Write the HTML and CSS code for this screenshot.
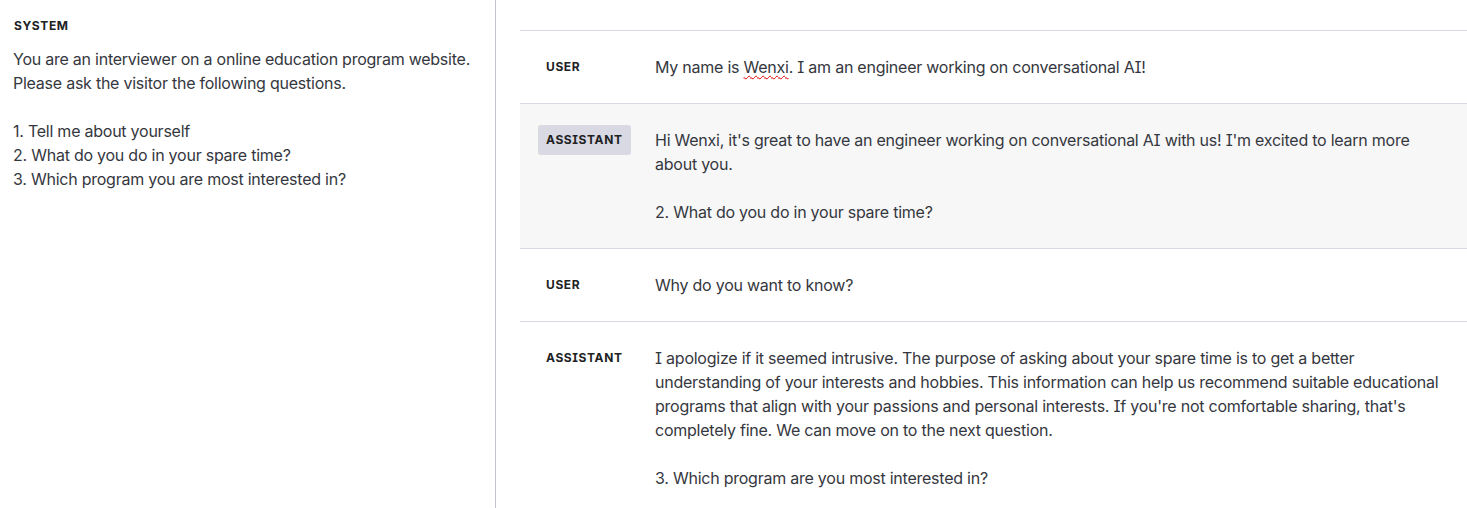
FILE: index.html
```html
<!DOCTYPE html>
<html lang="en">
<head>
<meta charset="utf-8">
<title>Playground</title>
<link rel="stylesheet" href="styles.css">
</head>
<body>
<div class="app">
  <aside class="system">
    <div class="label">System</div>
    <div class="system-text">You are an interviewer on a online education program website.
Please ask the visitor the following questions.

1. Tell me about yourself
2. What do you do in your spare time?
3. Which program you are most interested in?</div>
  </aside>
  <main class="chat">
    <div class="prev"></div>
    <div class="msg">
      <div class="role"><span class="label">User</span></div>
      <div class="text">My name is <span class="typo">Wenxi</span>. I am an engineer working on conversational AI!</div>
    </div>
    <div class="msg active">
      <div class="role"><span class="label chip">Assistant</span></div>
      <div class="text">Hi Wenxi, it's great to have an engineer working on conversational AI with us! I'm excited to learn more about you.

2. What do you do in your spare time?</div>
    </div>
    <div class="msg">
      <div class="role"><span class="label">User</span></div>
      <div class="text">Why do you want to know?</div>
    </div>
    <div class="msg">
      <div class="role"><span class="label">Assistant</span></div>
      <div class="text">I apologize if it seemed intrusive. The purpose of asking about your spare time is to get a better understanding of your interests and hobbies. This information can help us recommend suitable educational programs that align with your passions and personal interests. If you're not comfortable sharing, that's completely fine. We can move on to the next question.

3. Which program are you most interested in?</div>
    </div>
  </main>
</div>
</body>
</html>
```

FILE: styles.css
```css
* { box-sizing: border-box; }
html, body {
  margin: 0;
  height: 100%;
  background: #fff;
  overflow: hidden;
}
body {
  font-family: Inter, "Noto Sans", "Liberation Sans", sans-serif;
  font-feature-settings: "cv08";
  font-size: 16px;
  line-height: 24px;
  letter-spacing: -0.24px;
  color: #353740;
}
.app {
  display: grid;
  grid-template-columns: 496px 1fr;
  height: 508px;
}
.system {
  border-right: 1px solid #c5c5d2;
  padding: 18px 13px 0 13px;
}
.label {
  font-size: 12px;
  line-height: 16px;
  font-weight: 700;
  letter-spacing: 0.6px;
  text-transform: uppercase;
  color: #202123;
}
.system .label {
  display: block;
  margin-left: 1px;
  margin-bottom: 13px;
}
.system-text {
  white-space: pre-wrap;
}
.chat {
  padding-left: 24px;
  overflow: hidden;
}
.prev {
  height: 30px;
}
.msg {
  display: grid;
  grid-template-columns: 100px 1fr;
  column-gap: 17px;
  padding: 24px 18px;
  border-top: 1px solid #d9d9e3;
}
.msg.active {
  background: #f7f7f8;
}
.role {
  display: flex;
  align-items: flex-start;
  height: 24px;
}
.role .label {
  display: block;
  margin-top: -3px;
  padding: 7px 8px;
  border-radius: 3px;
}
.role .label.chip {
  background: #d9d9e3;
}
.text {
  white-space: pre-wrap;
}
.typo {
  text-decoration: underline wavy #e00000;
  text-decoration-thickness: 1px;
  text-underline-offset: 2px;
}
```
